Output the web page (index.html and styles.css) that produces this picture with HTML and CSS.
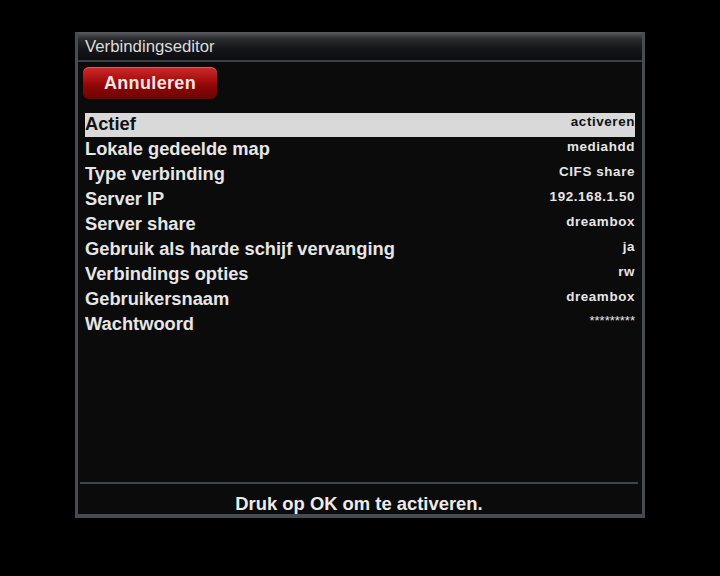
FILE: index.html
```html
<!DOCTYPE html>
<html lang="nl">
<head>
  <meta charset="UTF-8" />
  <title>Verbindingseditor</title>
  <link rel="stylesheet" href="styles.css">
</head>
<body>

<div class="window">
  <div class="title-bar">Verbindingseditor</div>
  <div class="window-body">
    <div class="buttons">
      <div class="btn-red">Annuleren</div>
    </div>

    <ul class="config-list">
      <li class="selected"><span class="label">Actief</span><span class="value">activeren</span></li>
      <li><span class="label">Lokale gedeelde map</span><span class="value">mediahdd</span></li>
      <li><span class="label">Type verbinding</span><span class="value">CIFS share</span></li>
      <li><span class="label">Server IP</span><span class="value">192.168.1.50</span></li>
      <li><span class="label">Server share</span><span class="value">dreambox</span></li>
      <li><span class="label">Gebruik als harde schijf vervanging</span><span class="value">ja</span></li>
      <li><span class="label">Verbindings opties</span><span class="value">rw</span></li>
      <li><span class="label">Gebruikersnaam</span><span class="value">dreambox</span></li>
      <li><span class="label">Wachtwoord</span><span class="value password">*********</span></li>
    </ul>

    <div class="help-text">Druk op OK om te activeren.</div>
  </div>
</div>

</body>
</html>
```

FILE: styles.css
```css
body {
  margin: 0;
  background: #000;
  font-family: 'Liberation Sans', Arial, sans-serif;
  color: #e6e6e6;
}

.window {
  width: 564px;
  height: 482px;
  margin: 32px 0 0 75px;
  border: 3px solid #484b52;
  border-top: none;
  border-bottom-width: 4px;
  background: #0b0b0b;
  display: flex;
  flex-direction: column;
}

.title-bar {
  height: 28px;
  line-height: 30px;
  padding-left: 7px;
  font-size: 16.8px;
  color: #dcdcdc;
  background: linear-gradient(to bottom, #5a5c60 0%, #2a2b2e 25%, #141517 60%, #0e0e10 100%);
  border-bottom: 2px solid #3c3f44;
}

.window-body {
  flex: 1;
  display: flex;
  flex-direction: column;
  padding: 5px 7px 0 5px;
}

.buttons {
  display: flex;
  margin-bottom: 14px;
}

.btn-red {
  width: 134px;
  height: 32px;
  line-height: 32px;
  text-align: center;
  font-weight: bold;
  font-size: 18px;
  letter-spacing: 0.35px;
  color: #f5e4e4;
  border-radius: 6px;
  background: linear-gradient(to bottom, #d02a2a 0%, #a81010 40%, #8c0606 60%, #6e0404 100%);
  box-shadow: inset 0 1px 0 rgba(255, 255, 255, 0.25);
}

.config-list {
  list-style: none;
  margin: 0;
  padding: 0 0 0 2px;
  flex: 1;
}

.config-list li {
  height: 25px;
  display: flex;
  justify-content: space-between;
  align-items: flex-start;
}

.config-list .label {
  font-size: 18.3px;
  font-weight: bold;
  line-height: 21px;
}

.config-list .value {
  font-size: 13.4px;
  font-weight: bold;
  letter-spacing: 0.6px;
  line-height: 18px;
}

.config-list .password {
  font-size: 13px;
  letter-spacing: 0;
  font-weight: normal;
  line-height: 16px;
}

.config-list li.selected {
  background: #d9d9d9;
  color: #111;
  height: 24px;
  margin-bottom: 1px;
}

.help-text {
  border-top: 2px solid #3a4652;
  margin: 0 -3px 0 -3px;
  height: 30px;
  line-height: 40px;
  text-align: center;
  font-weight: bold;
  font-size: 18.4px;
  color: #ececec;
}
```
